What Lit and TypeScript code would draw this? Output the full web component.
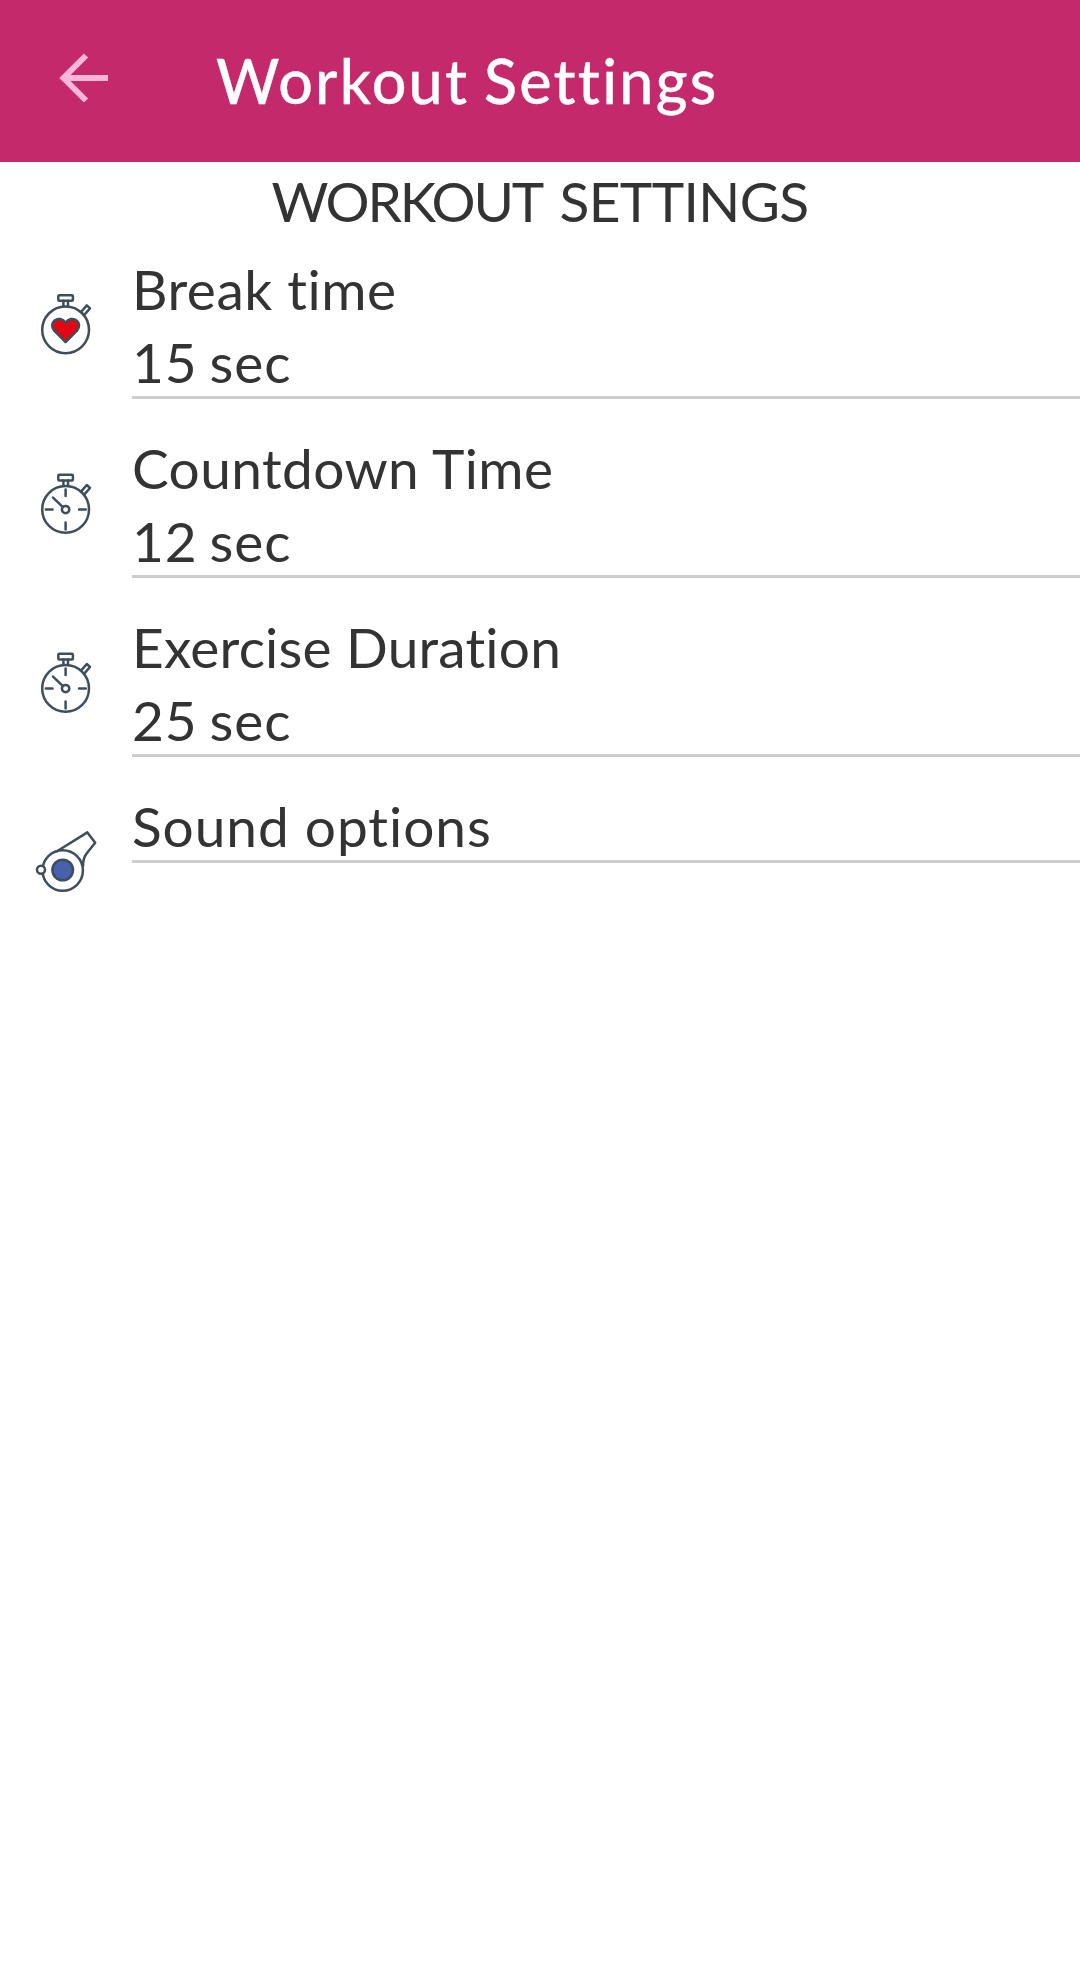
import { LitElement, html, css, svg } from "lit";
import { customElement } from "lit/decorators.js";

const stopwatchBody = svg`
  <rect x="58.3" y="41.2" width="14.6" height="5.6" rx="1"></rect>
  <path d="M63.4 46.8v5M68 46.8v5"></path>
  <circle cx="65.6" cy="75.8" r="23.4"></circle>
  <path d="M81.2 57.8l5.6-6.4 3.2 3-5.6 6.4"></path>`;

const heartWatch = html`<svg class="icon" viewBox="0 0 132 112">
  ${stopwatchBody}
  <path class="heart" d="M65.6 88.2L54.2 76.6c-3-3.4-2.6-7.8.4-10.2 3.4-2.6 8.4-1.6 11 2.2 2.6-3.8 7.6-4.8 11-2.2 3 2.4 3.4 6.8.4 10.2z"></path>
</svg>`;

const dialWatch = html`<svg class="icon" viewBox="0 -0.6 132 112">
  ${stopwatchBody}
  <circle cx="65.6" cy="76" r="3.7"></circle>
  <path d="M62.7 73.2L53 64M65.6 55.8v6.6M65.6 89v7M45.8 76h6.8M79 76h6.8"></path>
</svg>`;

const whistle = html`<svg class="icon" viewBox="0 0 132 112">
  <path d="M57 60.2L87.4 41.4l7.8 10.4-8.6 10.7c-2.6 3.5-3.6 6.8-3.6 12.5"></path>
  <circle cx="62.7" cy="79.5" r="20.2"></circle>
  <circle class="ball" cx="62.7" cy="79" r="10.3"></circle>
  <circle class="ring" cx="41" cy="78.7" r="4"></circle>
</svg>`;

const rows = [
  { icon: heartWatch, label: "Break time", value: "15 sec", fit: "break" },
  { icon: dialWatch, label: "Countdown Time", value: "12 sec", fit: "countdown" },
  { icon: dialWatch, label: "Exercise Duration", value: "25 sec", fit: "exercise" },
  { icon: whistle, label: "Sound options", value: "", fit: "sound" },
];

@customElement("app-root")
export class AppRoot extends LitElement {
  static styles = css`
    :host {
      display: block;
      min-height: 1973px;
      background: #fff;
      color: #333;
      font: 400 55px/69px Lato, "Liberation Sans", sans-serif;
      font-variant-ligatures: none;
      overflow: hidden;
    }
    .bar {
      display: flex;
      align-items: center;
      height: 162px;
      box-sizing: border-box;
      padding-left: 48px;
      background: #c4296c;
      color: #fff;
    }
    .back {
      width: 72px;
      height: 72px;
      margin-top: -6px;
      fill: none;
      stroke: #fbb6d9;
      stroke-width: 6;
    }
    .title {
      margin: 0 0 0 96px;
      font-size: 61px;
      font-weight: 500;
      line-height: 74px;
      letter-spacing: 2.25px;
      word-spacing: -3px;
      -webkit-text-stroke: 0.3px #fff;
      white-space: nowrap;
    }
    .heading {
      margin: 5px 0 18px;
      text-align: center;
      font-size: 55px;
      font-weight: 400;
      letter-spacing: -0.6px;
      word-spacing: 4px;
    }
    .tight { letter-spacing: -2.2px; }
    .list {
      display: flex;
      flex-direction: column;
      gap: 34px;
    }
    .row {
      display: flex;
      align-items: flex-start;
    }
    .icon {
      flex: none;
      width: 132px;
      height: 112px;
      fill: none;
      stroke: #3d4f5b;
      stroke-width: 2.5;
      stroke-linejoin: round;
      stroke-linecap: round;
    }
    .heart { fill: #e30613; }
    .ball { fill: #4960ad; }
    .ring { fill: #fff; }
    .text {
      flex: 1;
      display: flex;
      flex-direction: column;
      gap: 4px;
      border-bottom: 3px solid #cdcdcd;
      white-space: nowrap;
    }
    .label, .value {
      height: 68px;
      padding-top: 1px;
    }
    .value {
      letter-spacing: 0.9px;
      word-spacing: -3px;
    }
    .break { letter-spacing: 0.5px; }
    .countdown { letter-spacing: 0.4px; }
    .exercise { letter-spacing: 0.2px; }
    .sound { letter-spacing: 0.95px; }
  `;

  render() {
    return html`
      <header class="bar">
        <svg class="back" viewBox="0 0 72 72"><path d="M60 36H17M38 13.5L15.5 36 38 58.5"></path></svg>
        <h1 class="title">Workout Settings</h1>
      </header>
      <h2 class="heading"><span class="tight">WORKOUT</span> SETTINGS</h2>
      <div class="list">
        ${rows.map(
          (r) => html`<div class="row">
            ${r.icon}
            <div class="text">
              <span class="label ${r.fit}">${r.label}</span>
              ${r.value ? html`<span class="value">${r.value}</span>` : ""}
            </div>
          </div>`,
        )}
      </div>
    `;
  }
}
